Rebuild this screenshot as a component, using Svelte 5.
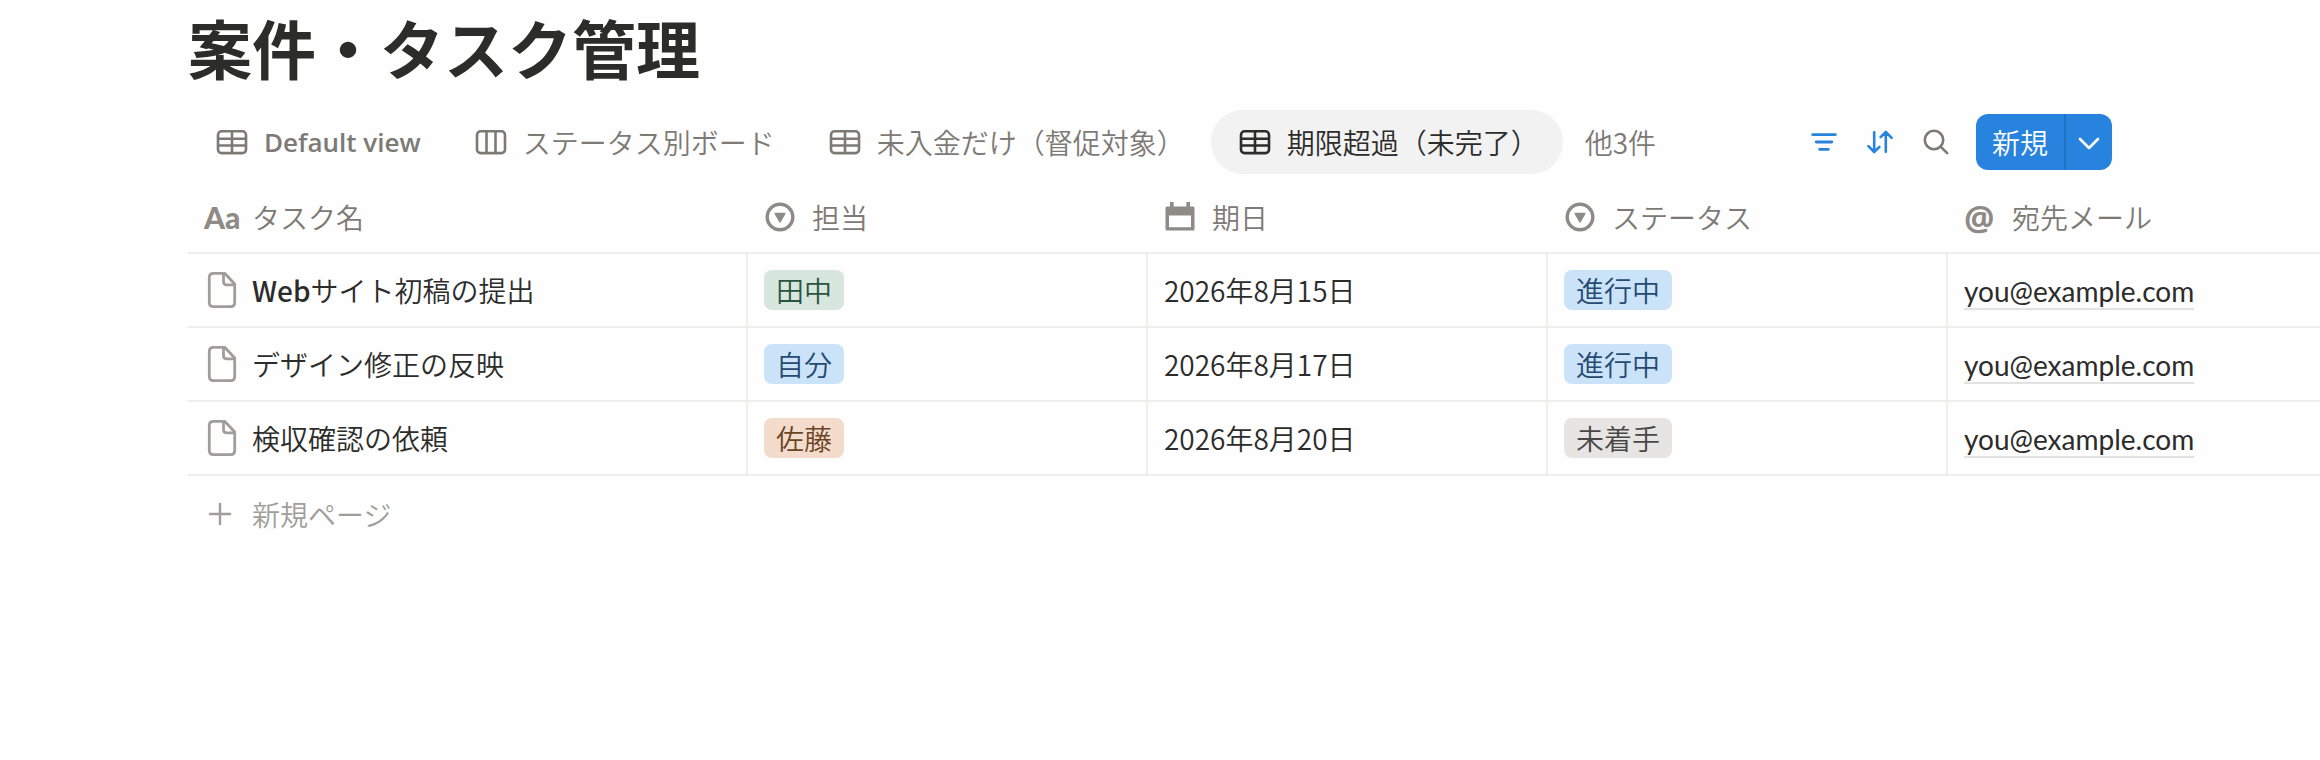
<script>
  const tabs = [
    { label: 'Default view', icon: 'table' },
    { label: 'ステータス別ボード', icon: 'board' },
    { label: '未入金だけ（督促対象）', icon: 'table' },
    { label: '期限超過（未完了）', icon: 'table' }
  ];

  const columns = [
    { label: 'タスク名', icon: 'title' },
    { label: '担当', icon: 'select' },
    { label: '期日', icon: 'date' },
    { label: 'ステータス', icon: 'select' },
    { label: '宛先メール', icon: 'email' }
  ];

  const tasks = [
    { name: 'Webサイト初稿の提出', owner: '田中', ownerColor: 'green', due: '2026年8月15日', status: '進行中', statusColor: 'blue', email: 'you@example.com' },
    { name: 'デザイン修正の反映', owner: '自分', ownerColor: 'blue', due: '2026年8月17日', status: '進行中', statusColor: 'blue', email: 'you@example.com' },
    { name: '検収確認の依頼', owner: '佐藤', ownerColor: 'orange', due: '2026年8月20日', status: '未着手', statusColor: 'gray', email: 'you@example.com' }
  ];

  let activeTab = $state(3);

  // Latin words in a task name are set heavier than the Japanese around them
  function splitLatin(name) {
    return name.split(/([A-Za-z]+)/).filter(Boolean);
  }
</script>

<main>
  <div class="top">
    <h1>案件・タスク管理</h1>

    <div class="bar">
      <nav class="tabs">
        {#each tabs as tab, i}
          <button class="tab" class:active={i === activeTab} onclick={() => (activeTab = i)}>
            <svg width="32" height="32" viewBox="0 0 32 32" fill="none" stroke="currentColor" stroke-width="2.6">
              <rect x="2" y="5.3" width="28" height="21.8" rx="3.6" />
              {#if tab.icon === 'table'}
                <path d="M2 12.8h28M2 19.5h28M16 5v22" />
              {:else}
                <path d="M11.5 5v22M20.5 5v22" />
              {/if}
            </svg>
            <span>{tab.label}</span>
          </button>
        {/each}
        <button class="more">他3件</button>
      </nav>

      <div class="tools">
        <button class="tool blue-icon" aria-label="フィルター">
          <svg width="28" height="28" viewBox="0 0 28 28" fill="none" stroke="currentColor" stroke-width="2.8" stroke-linecap="round">
            <path d="M2.6 6.6h22.8M6.2 14h15.6M9.6 21.3h8.8" />
          </svg>
        </button>
        <button class="tool blue-icon" aria-label="並べ替え">
          <svg width="28" height="28" viewBox="0 0 28 28" fill="none" stroke="currentColor" stroke-width="2.6" stroke-linecap="round" stroke-linejoin="round">
            <path d="M8.2 4.2v19.6M2.4 18.2l5.8 5.8 5.2-5.2M19.8 23.8V4.2M14.6 9.2l5.2-5.2 5.8 5.8" />
          </svg>
        </button>
        <button class="tool" aria-label="検索">
          <svg width="28" height="28" viewBox="0 0 28 28" fill="none" stroke="currentColor" stroke-width="2.6" stroke-linecap="round">
            <circle cx="12" cy="12" r="9.2" />
            <path d="M18.8 18.8l6.4 6.4" />
          </svg>
        </button>
        <div class="new">
          <button class="new-main">新規</button>
          <button class="new-menu" aria-label="テンプレート">
            <svg width="24" height="24" viewBox="0 0 24 24" fill="none" stroke="currentColor" stroke-width="2.6" stroke-linecap="round" stroke-linejoin="round">
              <path d="M3 9l9 9 9-9" />
            </svg>
          </button>
        </div>
      </div>
    </div>
  </div>

  <table>
    <colgroup>
      <col class="wide" />
      <col class="normal" />
      <col class="normal" />
      <col class="normal" />
      <col />
    </colgroup>
    <thead>
      <tr>
        {#each columns as column}
          <th scope="col">
            <div class="head">
              {#if column.icon === 'title'}
                <span class="aa">Aa</span>
              {:else if column.icon === 'select'}
                <svg width="32" height="32" viewBox="0 0 32 32">
                  <circle cx="16" cy="16" r="12.8" fill="none" stroke="currentColor" stroke-width="3.4" />
                  <path d="M11.4 11.8h9.2q1.4 0 .8 1.2l-4.6 8q-.8 1.2-1.6 0l-4.6-8q-.6-1.2.8-1.2z" fill="currentColor" />
                </svg>
              {:else if column.icon === 'date'}
                <svg width="32" height="32" viewBox="0 0 32 32">
                  <path fill="currentColor" fill-rule="evenodd" d="M6 1h3.6v4.4h12.8V1H26v4.4h3q1.5 0 1.5 1.5V28q0 1.5-1.5 1.5H3Q1.5 29.5 1.5 28V6.9Q1.5 5.4 3 5.4h3zM5 14.5v11.7h22V14.5z" />
                </svg>
              {:else}
                <span class="at">@</span>
              {/if}
              <span>{column.label}</span>
            </div>
          </th>
        {/each}
      </tr>
    </thead>
    <tbody>
      {#each tasks as task}
        <tr>
          <td>
            <div class="name">
              <svg width="32" height="40" viewBox="0 0 32 40" fill="none" stroke="currentColor" stroke-width="2.8" stroke-linejoin="round">
                <path d="M7.5 3.3h11.2L28.7 14v18.5q0 4.2-4.2 4.2h-17q-4.2 0-4.2-4.2v-25q0-4.2 4.2-4.2z" />
                <path d="M17.5 3.5v8q0 3.3 3.3 3.3h7.7" />
              </svg>
              <span>
                {#each splitLatin(task.name) as part}<span class:latin={/^[A-Za-z]/.test(part)}>{part}</span>{/each}
              </span>
            </div>
          </td>
          <td><span class="tag {task.ownerColor}">{task.owner}</span></td>
          <td>{task.due}</td>
          <td><span class="tag {task.statusColor}">{task.status}</span></td>
          <td><a href="mailto:{task.email}">{task.email}</a></td>
        </tr>
      {/each}
    </tbody>
  </table>

  <button class="add">
    <svg width="24" height="24" viewBox="0 0 24 24" fill="none" stroke="currentColor" stroke-width="2.4" stroke-linecap="round">
      <path d="M12 2v20M2 12h20" />
    </svg>
    <span>新規ページ</span>
  </button>
</main>

<style>
:global(body) {
  margin: 0;
  background: #fefefe;
}

main {
  padding-left: 188px;
  font-family: "Noto Sans CJK JP", sans-serif;
  font-size: 28px;
  font-weight: 350;
  line-height: 40px;
  color: #2c2c2b;
}

button {
  border: 0;
  padding: 0;
  background: none;
  font: inherit;
  color: inherit;
  white-space: nowrap;
  cursor: pointer;
}

svg {
  display: block;
  flex: none;
}

.top {
  padding-right: 208px;
}

h1 {
  margin: 0;
  font-size: 64px;
  line-height: 92px;
  font-weight: 700;
}

.bar {
  display: flex;
  align-items: center;
  justify-content: space-between;
  margin-top: 18px;
  height: 64px;
  color: #7d7a75;
}

.tabs {
  display: flex;
  gap: 2px;
}

.tab {
  display: flex;
  align-items: center;
  gap: 16px;
  height: 64px;
  padding: 0 24px 0 28px;
  border-radius: 32px;
}

.tab:first-child {
  font-family: "Open Sans", sans-serif;
  font-size: 26px;
  font-weight: 600;
}

.latin {
  font-weight: 500;
}

.tab.active {
  background: #f2f2f2;
  color: #2c2c2b;
}

.more {
  padding: 0 20px;
}

.tools {
  display: flex;
  align-items: center;
}

.tool {
  padding: 14px;
}

.blue-icon {
  color: #2783de;
}

.new {
  display: flex;
  height: 56px;
  margin-left: 12px;
  border-radius: 12px;
  overflow: hidden;
  background: #2783de;
  color: #fff;
}

.new-main {
  padding: 0 16px;
  border-right: 2px solid #2272c4;
}

.new-menu {
  padding: 0 11px;
}

table {
  width: 100%;
  table-layout: fixed;
  border-collapse: separate;
  border-spacing: 0;
}

.wide {
  width: 560px;
}

.normal {
  width: 400px;
}

th,
td {
  box-sizing: border-box;
  padding: 0 16px;
  border-bottom: 2px solid #eeeeec;
  text-align: left;
  font-weight: inherit;
  white-space: nowrap;
}

th {
  height: 80px;
  padding-top: 8px;
  color: #7d7a75;
}

td {
  height: 74px;
  border-right: 2px solid #eeeeec;
}

td:last-child {
  border-right: 0;
}

.head {
  display: flex;
  align-items: center;
  gap: 16px;
}

.head svg,
.aa,
.at {
  color: #8e8b86;
}

.aa,
.at {
  width: 32px;
}

.aa {
  font-family: Lato, sans-serif;
  font-size: 30px;
  font-weight: 900;
}

.at {
  font-family: "Open Sans", sans-serif;
  font-size: 34px;
  font-weight: 700;
}

.name {
  display: flex;
  align-items: center;
  gap: 14px;
  padding-left: 2px;
}

.name svg {
  color: #a09e9a;
}

.tag {
  display: inline-block;
  padding: 0 12px;
  border-radius: 8px;
}

.green {
  background: #d8e7de;
  color: #2a5341;
}

.blue {
  background: #cbe3f9;
  color: #264a72;
}

.orange {
  background: #f4dccc;
  color: #6b4423;
}

.gray {
  background: #e6e5e3;
  color: #494846;
}

a {
  color: inherit;
  font-family: Lato, sans-serif;
  font-weight: 400;
  text-decoration: underline 2px #e2e2e0;
  text-underline-offset: 6px;
  text-decoration-skip-ink: none;
}

.add {
  display: flex;
  align-items: center;
  gap: 20px;
  height: 76px;
  padding: 0 20px;
  color: #a09e9a;
}
</style>
